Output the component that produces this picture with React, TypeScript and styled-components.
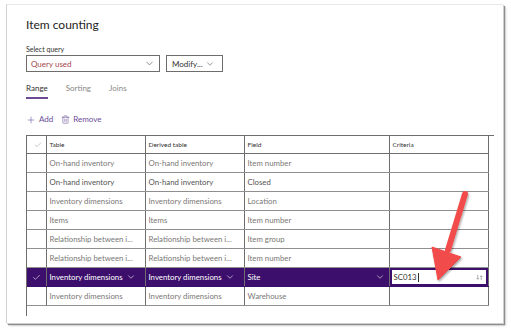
import styled, { createGlobalStyle } from "styled-components";
import { Check, ChevronDown, Plus, Trash2 } from "lucide-react";

const GlobalStyle = createGlobalStyle`
  html, body {
    margin: 0;
    padding: 0;
    background: #ffffff;
  }
  body {
    font-family: Lato, "Noto Sans", "Liberation Sans", sans-serif;
    color: #323130;
  }
`;

type Row = {
  table: string;
  derived: string;
  field: string;
  criteria?: string;
  selected?: boolean;
  strong?: boolean;
};

const rows: Row[] = [
  { table: "On-hand inventory", derived: "On-hand inventory", field: "Item number" },
  { table: "On-hand inventory", derived: "On-hand inventory", field: "Closed", strong: true },
  { table: "Inventory dimensions", derived: "Inventory dimensions", field: "Location" },
  { table: "Items", derived: "Items", field: "Item number" },
  { table: "Relationship between i...", derived: "Relationship between i...", field: "Item group" },
  { table: "Relationship between i...", derived: "Relationship between i...", field: "Item number" },
  { table: "Inventory dimensions", derived: "Inventory dimensions", field: "Site", criteria: "SC013", selected: true },
  { table: "Inventory dimensions", derived: "Inventory dimensions", field: "Warehouse" },
];

const App: React.FC<{}> = () => {
  return (
    <Page>
      <GlobalStyle />
      <Panel>
        <Title>Item counting</Title>
        <FieldLabel>Select query</FieldLabel>
        <QueryRow>
          <Select>
            <span>Query used</span>
            <ChevronDown size={11} strokeWidth={1.3} color="#444" />
          </Select>
          <ModifyButton>
            <span>Modify...</span>
            <ChevronDown size={10} strokeWidth={1.3} color="#444" />
          </ModifyButton>
        </QueryRow>

        <Tabs>
          <Tab active>Range</Tab>
          <Tab>Sorting</Tab>
          <Tab>Joins</Tab>
        </Tabs>

        <ActionBar>
          <ActionButton>
            <Plus size={10} strokeWidth={1.3} />
            Add
          </ActionButton>
          <ActionButton>
            <Trash2 size={9} strokeWidth={1.5} />
            Remove
          </ActionButton>
        </ActionBar>

        <GridWrap>
          <GridTable>
            <colgroup>
              <col style={{ width: 19 }} />
              <col style={{ width: 99 }} />
              <col style={{ width: 99 }} />
              <col style={{ width: 145 }} />
              <col style={{ width: 99 }} />
            </colgroup>
            <thead>
              <tr>
                <HeadCell center>
                  <Check size={8} strokeWidth={1.4} color="#8a8886" />
                </HeadCell>
                <HeadCell>Table</HeadCell>
                <HeadCell>Derived table</HeadCell>
                <HeadCell>Field</HeadCell>
                <HeadCell>Criteria</HeadCell>
              </tr>
            </thead>
            <tbody>
              {rows.map((r, i) => (
                <BodyRow key={i} selected={r.selected} strong={r.strong}>
                  <CheckCell>
                    {r.selected && <Check size={9} strokeWidth={1.5} color="#ffffff" />}
                  </CheckCell>
                  <Cell>
                    <CellText>
                      {r.table}
                      {r.selected && <ChevronDown size={10} strokeWidth={1.4} />}
                    </CellText>
                  </Cell>
                  <Cell>
                    <CellText>
                      {r.derived}
                      {r.selected && <ChevronDown size={10} strokeWidth={1.4} />}
                    </CellText>
                  </Cell>
                  <Cell>
                    <CellText spread={r.selected}>
                      {r.field}
                      {r.selected && <ChevronDown size={10} strokeWidth={1.4} />}
                    </CellText>
                  </Cell>
                  <Cell>
                    {r.selected ? (
                      <CriteriaInput>
                        <span>
                          {r.criteria}
                          <Caret />
                        </span>
                        <LookupIcon width="7" height="7" viewBox="0 0 8 8">
                          <path d="M2 1 V6 M0.8 4.6 L2 6 L3.2 4.6 M6 7 V2 M4.8 3.4 L6 2 L7.2 3.4" stroke="#9a9a9a" strokeWidth="0.9" fill="none" />
                        </LookupIcon>
                      </CriteriaInput>
                    ) : null}
                  </Cell>
                </BodyRow>
              ))}
            </tbody>
          </GridTable>
        </GridWrap>
      </Panel>

      <ArrowOverlay width="511" height="336" viewBox="0 0 511 336">
        <defs>
          <filter id="shadow" x="-20%" y="-20%" width="140%" height="140%">
            <feDropShadow dx="1" dy="1.5" stdDeviation="1.2" floodColor="#000" floodOpacity="0.35" />
          </filter>
        </defs>
        <g filter="url(#shadow)" fill="#f24b4b" stroke="#f24b4b">
          <line x1="465" y1="194" x2="448" y2="250" strokeWidth="6" strokeLinecap="round" />
          <polygon points="432,247 461,257 438,280" strokeWidth="1" strokeLinejoin="round" />
        </g>
      </ArrowOverlay>
    </Page>
  );
};

export default App;

const Page = styled.div`
  position: relative;
  width: 511px;
  height: 336px;
  overflow: hidden;
  padding: 4px 0 0 6px;
  box-sizing: border-box;
`;

const Panel = styled.div`
  width: 497px;
  height: 319px;
  box-sizing: border-box;
  border-top: 1px solid #e8e8e8;
  border-left: 1px solid #d0d0d0;
  box-shadow: 1px 1px 0 #cfcfcf, 2px 2px 1px #8d8d8d, 3px 3px 2px rgba(0, 0, 0, 0.15);
  padding: 12px 0 0 19px;
  background: #ffffff;
  display: flex;
  flex-direction: column;
`;

const Title = styled.div`
  font-size: 12px;
  line-height: 16px;
  color: #252423;
`;

const FieldLabel = styled.div`
  margin-top: 11px;
  font-size: 7px;
  line-height: 10px;
  color: #323130;
`;

const QueryRow = styled.div`
  margin-top: 1px;
  display: flex;
  gap: 6px;
`;

const Select = styled.div`
  width: 134px;
  height: 17px;
  box-sizing: border-box;
  border: 1px solid #6f6d6b;
  display: flex;
  align-items: center;
  justify-content: space-between;
  padding: 0 4px 0 4px;
  font-size: 8px;
  color: #a4474a;
`;

const ModifyButton = styled.div`
  width: 57px;
  height: 17px;
  box-sizing: border-box;
  border: 1px solid #6f6d6b;
  display: flex;
  align-items: center;
  gap: 2px;
  padding: 0 0 0 5px;
  font-size: 8px;
  color: #323130;
`;

const Tabs = styled.div`
  margin-top: 11px;
  display: flex;
  gap: 18px;
`;

const Tab = styled.div<{ active?: boolean }>`
  font-size: 8px;
  line-height: 11px;
  padding-bottom: 3px;
  color: ${(p) => (p.active ? "#323130" : "#8a8886")};
  border-bottom: 2px solid ${(p) => (p.active ? "#6b4a94" : "transparent")};
`;

const ActionBar = styled.div`
  margin-top: 15px;
  display: flex;
  gap: 8px;
`;

const ActionButton = styled.div`
  display: flex;
  align-items: center;
  gap: 3px;
  font-size: 8px;
  line-height: 11px;
  color: #6a4c98;
`;

const GridWrap = styled.div`
  margin-top: 10px;
  width: 468px;
  height: 181px;
  box-sizing: border-box;
  border-top: 1px solid #6e6e6e;
  border-left: 1px solid #6e6e6e;
`;

const GridTable = styled.table`
  border-collapse: collapse;
  table-layout: fixed;
  width: 461px;
`;

const HeadCell = styled.th<{ center?: boolean }>`
  height: 17px;
  padding: 0 0 0 3px;
  text-align: ${(p) => (p.center ? "center" : "left")};
  font-size: 6.5px;
  font-weight: 400;
  color: #323130;
  border-right: 1px solid #6e6e6e;
  border-bottom: 1px solid #6e6e6e;
  vertical-align: middle;

  svg {
    display: block;
    margin: 0 auto;
  }
`;

const BodyRow = styled.tr<{ selected?: boolean; strong?: boolean }>`
  height: 19px;
  background: ${(p) => (p.selected ? "#3c0f6c" : "#ffffff")};
  color: ${(p) => (p.selected ? "#ffffff" : p.strong ? "#555453" : "#7a7876")};

  td {
    border-bottom: 1px solid ${(p) => (p.selected ? "#3c0f6c" : "#8f8f8f")};
  }
`;

const Cell = styled.td`
  padding: 0 3px 0 3px;
  border-right: 1px solid #6e6e6e;
  font-size: 7.8px;
  white-space: nowrap;
  overflow: hidden;
  vertical-align: middle;
`;

const CheckCell = styled(Cell)`
  padding: 0;

  svg {
    display: block;
    margin: 0 auto;
  }
`;

const CellText = styled.div<{ spread?: boolean }>`
  display: flex;
  align-items: center;
  gap: 3px;
  justify-content: ${(p) => (p.spread ? "space-between" : "flex-start")};
  padding-right: ${(p) => (p.spread ? "1px" : "0")};
`;

const CriteriaInput = styled.div`
  margin: 0 -2px 0 -2px;
  height: 16px;
  box-sizing: border-box;
  background: #ffffff;
  border: 1px solid #3c0f6c;
  display: flex;
  align-items: center;
  justify-content: space-between;
  padding: 0 3px 0 2px;
  color: #323130;
  font-size: 7.8px;
`;

const Caret = styled.span`
  display: inline-block;
  width: 1px;
  height: 9px;
  margin-left: 1px;
  vertical-align: -2px;
  background: #323130;
`;

const LookupIcon = styled.svg`
  display: block;
`;

const ArrowOverlay = styled.svg`
  position: absolute;
  left: 0;
  top: 0;
  pointer-events: none;
`;
